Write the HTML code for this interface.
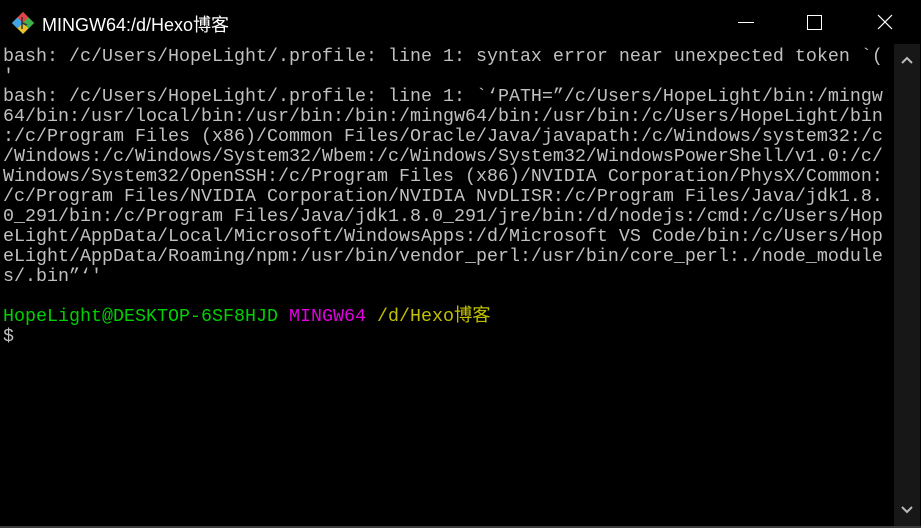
<!DOCTYPE html>
<html><head><meta charset="utf-8"><style>
html,body{margin:0;padding:0;background:#000;width:921px;height:528px;overflow:hidden;position:relative}
.title{position:absolute;left:0;top:0;width:921px;height:44px;background:#000;color:#fff;font:18px "Liberation Sans","Noto Sans CJK SC",sans-serif}
.title .t{position:absolute;left:42px;top:11px}
pre{position:absolute;left:3px;top:47px;margin:0;font:18.33px/20px "Liberation Mono","Noto Sans CJK SC",monospace;color:#c0c0c0;white-space:pre}
.g{color:#00d000}.m{color:#e000e0}.y{color:#c0c000}
.sb{position:absolute;left:894px;top:44px;width:26px;height:482px;background:#171717}
.bot{position:absolute;left:0;top:526px;width:921px;height:2px;background:#3a3a3a}
</style></head><body>
<div class="title">
<svg style="position:absolute;left:11px;top:11px" width="24" height="24" viewBox="0 0 24 24">
<polygon points="12,1 23,12 12,23 1,12" fill="#e8c02a"/>
<polygon points="1,12 6.5,6.5 12,12 6.5,17.5" fill="#3fa2ea"/>
<polygon points="12,1 17.5,6.5 12,12 6.5,6.5" fill="#e0434a"/>
<polygon points="17.5,6.5 23,12 17.5,17.5 12,12" fill="#3cb04a"/>
<path d="M11 6 L11 18 M11 12 L16 14" stroke="#333" stroke-width="1.5" fill="none"/>
</svg>
<span class="t">MINGW64:/d/Hexo博客</span>
<div style="position:absolute;left:738px;top:22px;width:16px;height:1px;background:#fff"></div>
<div style="position:absolute;left:807px;top:15px;width:13px;height:13px;border:1px solid #fff"></div>
<svg style="position:absolute;left:877px;top:14px" width="16" height="16"><path d="M1 1L15 15M15 1L1 15" stroke="#fff" stroke-width="1.2"/></svg>
</div>
<pre>bash: /c/Users/HopeLight/.profile: line 1: syntax error near unexpected token `(
'
bash: /c/Users/HopeLight/.profile: line 1: `‘PATH=”/c/Users/HopeLight/bin:/mingw
64/bin:/usr/local/bin:/usr/bin:/bin:/mingw64/bin:/usr/bin:/c/Users/HopeLight/bin
:/c/Program Files (x86)/Common Files/Oracle/Java/javapath:/c/Windows/system32:/c
/Windows:/c/Windows/System32/Wbem:/c/Windows/System32/WindowsPowerShell/v1.0:/c/
Windows/System32/OpenSSH:/c/Program Files (x86)/NVIDIA Corporation/PhysX/Common:
/c/Program Files/NVIDIA Corporation/NVIDIA NvDLISR:/c/Program Files/Java/jdk1.8.
0_291/bin:/c/Program Files/Java/jdk1.8.0_291/jre/bin:/d/nodejs:/cmd:/c/Users/Hop
eLight/AppData/Local/Microsoft/WindowsApps:/d/Microsoft VS Code/bin:/c/Users/Hop
eLight/AppData/Roaming/npm:/usr/bin/vendor_perl:/usr/bin/core_perl:./node_module
s/.bin”‘'

<span class="g">HopeLight@DESKTOP-6SF8HJD</span> <span class="m">MINGW64</span> <span class="y">/d/Hexo博客</span>
$</pre>
<div class="sb">
<svg style="position:absolute;left:7px;top:12px" width="12" height="8"><path d="M1 7L6 2L11 7" stroke="#bbb" stroke-width="2" fill="none"/></svg>
<svg style="position:absolute;left:7px;top:462px" width="12" height="8"><path d="M1 1L6 6L11 1" stroke="#bbb" stroke-width="2" fill="none"/></svg>
</div>
<div class="bot"></div>
</body></html>
